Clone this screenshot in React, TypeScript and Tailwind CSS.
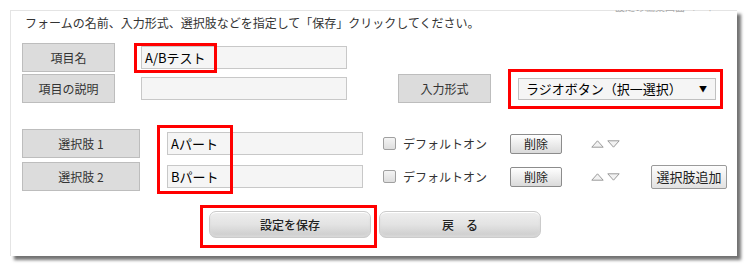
const font = { fontFamily: '"Noto Sans CJK JP", "Noto Sans", sans-serif' };

function Label({ text, w }: { text: string; w: string }) {
  return (
    <div
      className={`${w} h-[29px] flex items-center justify-center bg-[#dcdcdc] border border-[#bdbdbd] text-[12px] text-[#333]`}
    >
      {text}
    </div>
  );
}

function Arrows() {
  return (
    <div className="flex items-center gap-[3px]">
      <svg width="13" height="8" viewBox="0 0 13 8">
        <polygon points="6.5,0.8 12.2,7.2 0.8,7.2" fill="#f2f2f2" stroke="#9a9a9a" strokeWidth="1" />
      </svg>
      <svg width="13" height="8" viewBox="0 0 13 8">
        <polygon points="0.8,0.8 12.2,0.8 6.5,7.2" fill="#f2f2f2" stroke="#9a9a9a" strokeWidth="1" />
      </svg>
    </div>
  );
}

function OptionRow({ n, value, add }: { n: number; value: string; add?: boolean }) {
  return (
    <div className="flex items-center">
      <div className="ml-[11px]">
        <Label text={`選択肢 ${n}`} w="w-[118px]" />
      </div>
      <div className="ml-[27px] w-[196px] h-[23px] bg-[#f5f5f5] border border-[#c8c8c8] flex items-center pl-[3px] text-[13px] text-black">
        {value}
      </div>
      <div className="ml-[20px] w-[13px] h-[13px] rounded-[2px] border border-[#a0a0a0] bg-gradient-to-b from-[#f4f4f4] to-[#dedede]" />
      <span className="ml-[7px] w-[107px] text-[12px] text-[#333]">デフォルトオン</span>
      <button className="w-[52px] h-[20px] rounded-[2px] border border-[#8c8c8c] bg-gradient-to-b from-[#ffffff] to-[#dadada] text-[12px] text-[#222] leading-none">
        削除
      </button>
      <div className="ml-[29px]">
        <Arrows />
      </div>
      {add && (
        <button className="ml-[31px] w-[76px] h-[24px] rounded-[2px] border border-[#9a9a9a] bg-gradient-to-b from-[#fdfdfd] to-[#e2e2e2] text-[13px] text-[#222] leading-none">
          選択肢追加
        </button>
      )}
    </div>
  );
}

function BigButton({ text }: { text: string }) {
  return (
    <button className="w-[162px] h-[27px] rounded-[7px] border border-[#cbcbcb] bg-gradient-to-b from-[#eeeeee] via-[#e3e3e3] to-[#cbcbcb] shadow-[inset_0_1px_0_#ffffff,inset_0_-2px_2px_#d8d8d8] text-[12px] font-medium text-[#222] leading-none">
      {text}
    </button>
  );
}

export default function App() {
  return (
    <div className="w-[748px] h-[268px] bg-white pt-[10px] pl-[10px]" style={font}>
      <div className="relative w-[727px] h-[246px] bg-white border-t border-l border-[#e4e4e4] shadow-[4px_4px_3px_rgba(0,0,0,0.55)]">
        {/* clipped link text at top */}
        <div className="absolute right-[22px] -top-[1px] h-[3px] overflow-hidden">
          <div className="-mt-[9px] text-[10px] text-[#aaa] leading-[12px]">設定の編集画面へ　↑</div>
        </div>

        <p className="pl-[14px] pt-[4px] h-[22px] text-[12px] text-[#333] leading-[16px]">
          フォームの名前、入力形式、選択肢などを指定して「保存」クリックしてください。
        </p>

        {/* 項目名 */}
        <div className="mt-[10px] flex items-center">
          <div className="ml-[11px]">
            <Label text="項目名" w="w-[93px]" />
          </div>
          <div className="ml-[26px] w-[206px] h-[23px] bg-[#f5f5f5] border border-[#c8c8c8] flex items-center pl-[3px] text-[13px] text-black">
            A/Bテスト
          </div>
        </div>

        {/* 項目の説明 + 入力形式 */}
        <div className="mt-[2px] flex items-center">
          <div className="ml-[11px]">
            <Label text="項目の説明" w="w-[93px]" />
          </div>
          <div className="ml-[26px] w-[206px] h-[23px] bg-[#f5f5f5] border border-[#c8c8c8]" />
          <div className="ml-[51px]">
            <Label text="入力形式" w="w-[93px]" />
          </div>
          <div className="ml-[27px] w-[198px] h-[22px] bg-[#f5f5f5] border border-[#c0c0c0] flex items-center justify-between pl-[7px] pr-[8px] text-[13px] text-black">
            <span>ラジオボタン（択一選択）</span>
            <span className="text-[8px]">▼</span>
          </div>
        </div>

        {/* options */}
        <div className="mt-[26px] flex flex-col gap-[4px]">
          <OptionRow n={1} value="Aパート" />
          <OptionRow n={2} value="Bパート" add />
        </div>

        <div className="mt-[20px] ml-[198px] flex gap-[8px]">
          <BigButton text="設定を保存" />
          <BigButton text="戻　る" />
        </div>

        {/* red annotations */}
        <div className="absolute left-[123px] top-[32px] w-[83px] h-[30px] border-[3px] border-[#ff0000]" />
        <div className="absolute left-[497px] top-[58px] w-[215px] h-[40px] border-[3px] border-[#ff0000]" />
        <div className="absolute left-[146px] top-[114px] w-[76px] h-[69px] border-[3px] border-[#ff0000]" />
        <div className="absolute left-[189px] top-[194px] w-[177px] h-[43px] border-[3px] border-[#ff0000]" />
      </div>
    </div>
  );
}
